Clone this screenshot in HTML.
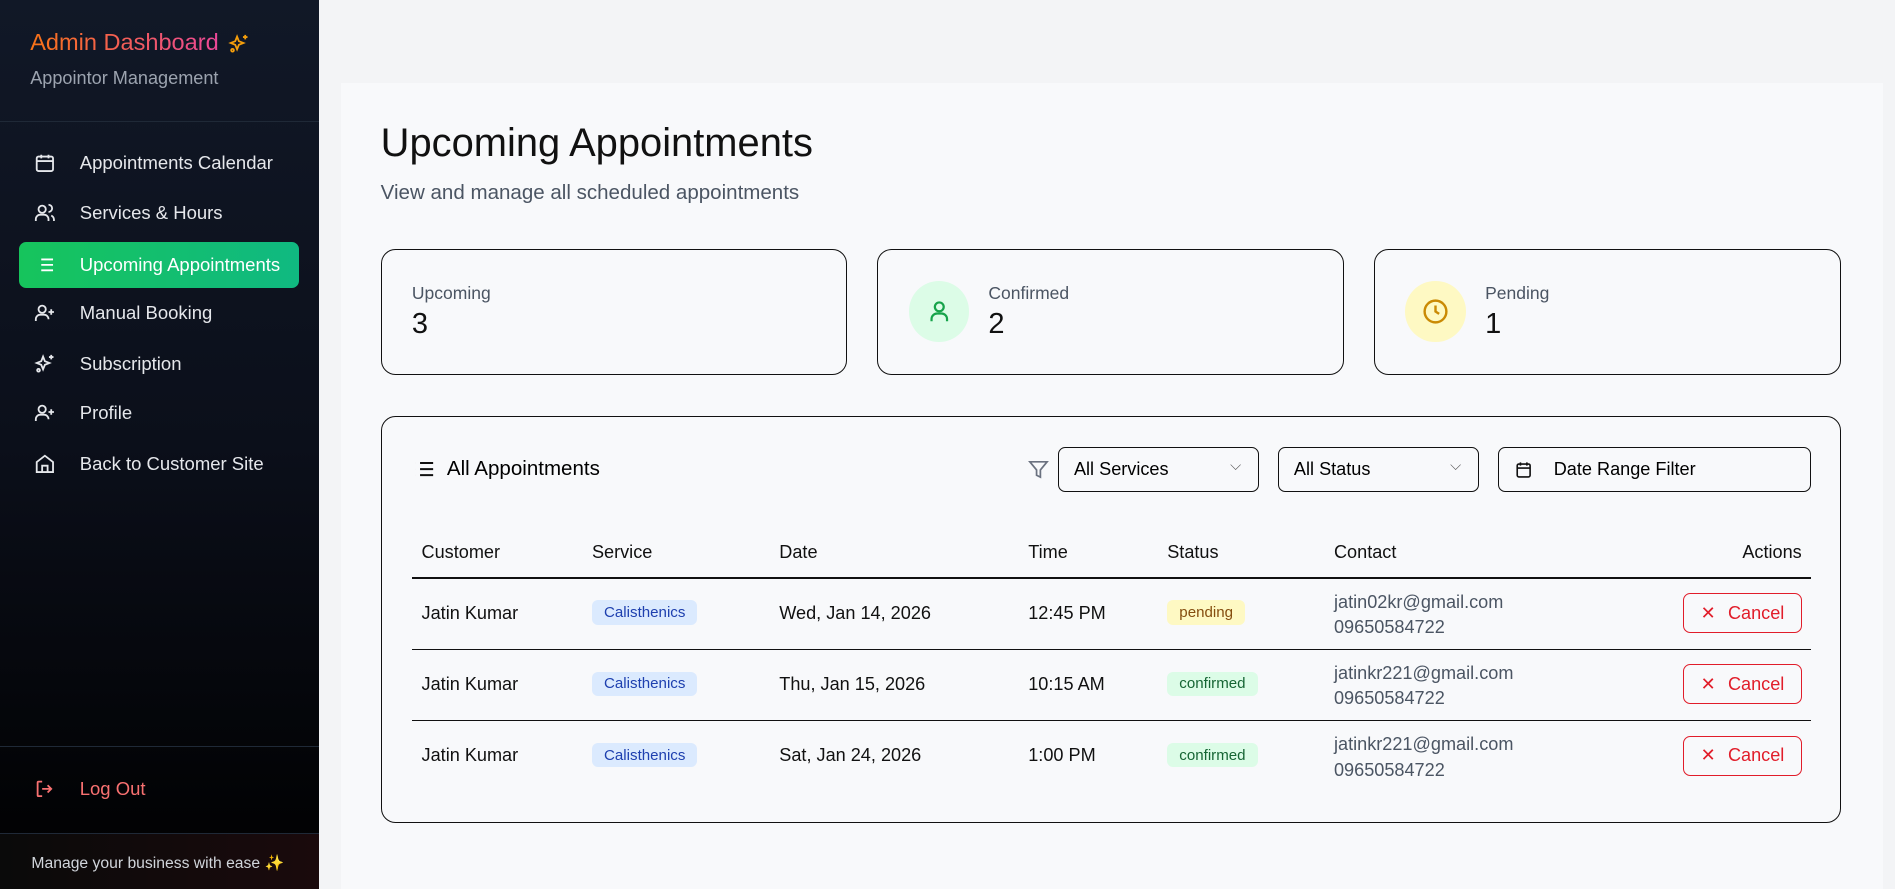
<!DOCTYPE html>
<html><head><style>
html{zoom:1.20855;overflow:hidden}
*{box-sizing:border-box;margin:0;padding:0}
body{width:1568px;height:736px;overflow:hidden;font-family:"Liberation Sans",sans-serif;background:#f3f4f6;position:relative}
.sb{position:absolute;left:0;top:0;width:264px;height:736px;background:linear-gradient(180deg,#111827 0%,#0b0f1a 50%,#000 100%)}
.ttl{position:absolute;left:25px;top:24px;font-size:19.5px;background:linear-gradient(90deg,#f97316,#ec4899);-webkit-background-clip:text;color:transparent}
.sub{position:absolute;left:25px;top:56px;font-size:15px;color:#9ca3af}
.hr{position:absolute;left:0;width:264px;height:1px;background:#1f2937}
.nav{position:absolute;left:16px;width:231px;height:38px;color:#e5e7eb;font-size:15.3px;display:flex;align-items:center}
.nav svg{position:absolute;left:12px}
.nav span{position:absolute;left:50px}
.act{background:linear-gradient(90deg,#16c45c,#10b981);border-radius:6px;color:#fff}
.main{position:absolute;left:282px;top:69px;width:1276px;height:667px;background:#f8f9fb}
.card{position:absolute;border:1px solid #111;border-radius:12px;background:#f8f9fb}
.lbl{position:absolute;font-size:14.5px;color:#4b5563}
.num{position:absolute;font-size:24px;color:#111}
.circ{position:absolute;left:25px;top:26px;width:50px;height:50px;border-radius:50%;display:flex;align-items:center;justify-content:center}
.sel{position:absolute;top:25px;height:37px;border:1px solid #111;border-radius:6px;font-size:15px;display:flex;align-items:center;padding-left:12px}
.row{position:absolute;left:25px;width:1158px;font-size:15px;color:#111}
.row div{position:absolute}
.pill{font-size:12.5px;padding:3px 10px;border-radius:5px}
.cx{position:absolute;right:8px;width:98px;height:33px;border:1px solid #e11d2a;border-radius:6px;color:#e11d2a;display:flex;align-items:center;justify-content:center;gap:10px;font-size:15px}
</style></head><body>
<div class="sb">
<div class="ttl">Admin Dashboard</div>
<svg style="position:absolute;left:189px;top:27px" width="18" height="18" viewBox="0 0 24 24" fill="none" stroke="#f59e0b" stroke-width="2"><path d="M10 4l2 5 5 2-5 2-2 5-2-5-5-2 5-2z"/><path d="M19 2v5M16.5 4.5h5"/><circle cx="5" cy="19" r="1.5"/></svg>
<div class="sub">Appointor Management</div>
<div class="hr" style="top:100px"></div>
<div class="nav" style="top:116px"><svg width="18" height="18" viewBox="0 0 24 24" fill="none" stroke="#e5e7eb" stroke-width="2"><rect x="3" y="5" width="18" height="16" rx="2"/><path d="M3 10h18M8 3v4M16 3v4"/></svg><span>Appointments Calendar</span></div>
<div class="nav" style="top:157px"><svg width="18" height="18" viewBox="0 0 24 24" fill="none" stroke="#e5e7eb" stroke-width="2"><circle cx="9" cy="8" r="4"/><path d="M2 21v-2a5 5 0 015-5h4a5 5 0 015 5v2M16 3a4 4 0 010 8M22 21v-2a5 5 0 00-3-4"/></svg><span>Services &amp; Hours</span></div>
<div class="nav act" style="top:200px"><svg width="18" height="18" viewBox="0 0 24 24" fill="none" stroke="#fff" stroke-width="2"><path d="M8 6h13M8 12h13M8 18h13M3 6h.01M3 12h.01M3 18h.01"/></svg><span>Upcoming Appointments</span></div>
<div class="nav" style="top:240px"><svg width="18" height="18" viewBox="0 0 24 24" fill="none" stroke="#e5e7eb" stroke-width="2"><circle cx="9" cy="8" r="4"/><path d="M2 21v-2a5 5 0 015-5h4a5 5 0 015 5M19 8v6M16 11h6"/></svg><span>Manual Booking</span></div>
<div class="nav" style="top:282px"><svg width="18" height="18" viewBox="0 0 24 24" fill="none" stroke="#e5e7eb" stroke-width="2"><path d="M10 4l2 5 5 2-5 2-2 5-2-5-5-2 5-2z"/><path d="M19 2v5M16.5 4.5h5"/><circle cx="5" cy="19" r="1.5"/></svg><span>Subscription</span></div>
<div class="nav" style="top:323px"><svg width="18" height="18" viewBox="0 0 24 24" fill="none" stroke="#e5e7eb" stroke-width="2"><circle cx="9" cy="8" r="4"/><path d="M2 21v-2a5 5 0 015-5h4a5 5 0 015 5M19 8v6M16 11h6"/></svg><span>Profile</span></div>
<div class="nav" style="top:365px"><svg width="18" height="18" viewBox="0 0 24 24" fill="none" stroke="#e5e7eb" stroke-width="2"><path d="M3 10l9-7 9 7v11H3z"/><path d="M9 21v-7h6v7"/></svg><span>Back to Customer Site</span></div>
<div class="hr" style="top:617px"></div>
<div class="nav" style="top:634px;color:#f87171"><svg width="18" height="18" viewBox="0 0 24 24" fill="none" stroke="#f87171" stroke-width="2"><path d="M9 4H5a1 1 0 00-1 1v14a1 1 0 001 1h4M15 8l4 4-4 4M19 12H9"/></svg><span>Log Out</span></div>
<div class="hr" style="top:689px"></div>
<div style="position:absolute;left:0;top:690px;width:264px;height:46px;background:linear-gradient(90deg,#0a0a0a,#1a0a0c)"></div>
<div style="position:absolute;left:26px;top:706px;font-size:13px;color:#d1d5db">Manage your business with ease ✨</div>
</div>
<div class="main">
<div style="position:absolute;left:33px;top:31px;font-size:33px;color:#111">Upcoming Appointments</div>
<div style="position:absolute;left:33px;top:81px;font-size:17px;color:#4b5563">View and manage all scheduled appointments</div>
<div class="card" style="left:33px;top:137px;width:386px;height:104px"><div class="lbl" style="left:25px;top:27px">Upcoming</div><div class="num" style="left:25px;top:48px">3</div></div>
<div class="card" style="left:444px;top:137px;width:386px;height:104px"><div class="circ" style="background:#dcfce7"><svg width="22" height="22" viewBox="0 0 24 24" fill="none" stroke="#16a34a" stroke-width="2"><circle cx="12" cy="8" r="4"/><path d="M5 21v-2a5 5 0 015-5h4a5 5 0 015 5v2"/></svg></div><div class="lbl" style="left:91px;top:27px">Confirmed</div><div class="num" style="left:91px;top:48px">2</div></div>
<div class="card" style="left:855px;top:137px;width:386px;height:104px"><div class="circ" style="background:#fef9c3"><svg width="24" height="24" viewBox="0 0 24 24" fill="none" stroke="#ca8a04" stroke-width="2"><circle cx="12" cy="12" r="9"/><path d="M12 7v5l3 2"/></svg></div><div class="lbl" style="left:91px;top:27px">Pending</div><div class="num" style="left:91px;top:48px">1</div></div>
<div class="card" style="left:33px;top:275px;width:1208px;height:337px">
<svg style="position:absolute;left:25px;top:33px" width="20" height="20" viewBox="0 0 24 24" fill="none" stroke="#111" stroke-width="2"><path d="M8 6h13M8 12h13M8 18h13M3 6h.01M3 12h.01M3 18h.01"/></svg>
<div style="position:absolute;left:54px;top:33px;font-size:17px">All Appointments</div>
<svg style="position:absolute;left:534px;top:34px" width="19" height="19" viewBox="0 0 24 24" fill="none" stroke="#6b7280" stroke-width="1.8"><path d="M3 4h18l-7 8.5V20l-4-2v-5.5z"/></svg>
<div class="sel" style="left:560px;width:166px">All Services<span style="position:absolute;right:14px;top:8px;font-size:12px;color:#555">⌵</span></div>
<div class="sel" style="left:742px;width:166px">All Status<span style="position:absolute;right:14px;top:8px;font-size:12px;color:#555">⌵</span></div>
<div class="sel" style="left:924px;width:259px"><svg width="16" height="16" viewBox="0 0 24 24" fill="none" stroke="#111" stroke-width="2"><rect x="4" y="5" width="16" height="16" rx="2"/><path d="M4 10h16M8 3v4M16 3v4"/></svg><span style="margin-left:17px">Date Range Filter</span></div>
<div class="row" style="top:104px;height:30px;font-size:15px"><div style="left:8px">Customer</div><div style="left:149px">Service</div><div style="left:304px">Date</div><div style="left:510px">Time</div><div style="left:625px">Status</div><div style="left:763px">Contact</div><div style="right:8px">Actions</div></div>
<div style="position:absolute;left:25px;top:133px;width:1158px;height:1px;background:#111"></div>
<div style="position:absolute;left:25px;top:192px;width:1158px;height:1px;background:#111"></div>
<div style="position:absolute;left:25px;top:251px;width:1158px;height:1px;background:#111"></div>
<div class="row" style="top:134px;height:58px"><div style="left:8px;top:20px">Jatin Kumar</div><div class="pill" style="left:149px;top:18px;background:#dbeafe;color:#1e40af">Calisthenics</div><div style="left:304px;top:20px">Wed, Jan 14, 2026</div><div style="left:510px;top:20px">12:45 PM</div><div class="pill" style="left:625px;top:18px;background:#fef9c3;color:#854d0e">pending</div><div style="left:763px;top:9px;color:#4b5563;line-height:21px">jatin02kr@gmail.com<br>09650584722</div><div class="cx" style="top:12px">✕<span>Cancel</span></div></div>
<div class="row" style="top:193px;height:58px"><div style="left:8px;top:20px">Jatin Kumar</div><div class="pill" style="left:149px;top:18px;background:#dbeafe;color:#1e40af">Calisthenics</div><div style="left:304px;top:20px">Thu, Jan 15, 2026</div><div style="left:510px;top:20px">10:15 AM</div><div class="pill" style="left:625px;top:18px;background:#dcfce7;color:#166534">confirmed</div><div style="left:763px;top:9px;color:#4b5563;line-height:21px">jatinkr221@gmail.com<br>09650584722</div><div class="cx" style="top:12px">✕<span>Cancel</span></div></div>
<div class="row" style="top:252px;height:58px"><div style="left:8px;top:20px">Jatin Kumar</div><div class="pill" style="left:149px;top:18px;background:#dbeafe;color:#1e40af">Calisthenics</div><div style="left:304px;top:20px">Sat, Jan 24, 2026</div><div style="left:510px;top:20px">1:00 PM</div><div class="pill" style="left:625px;top:18px;background:#dcfce7;color:#166534">confirmed</div><div style="left:763px;top:9px;color:#4b5563;line-height:21px">jatinkr221@gmail.com<br>09650584722</div><div class="cx" style="top:12px">✕<span>Cancel</span></div></div>
</div>
</div>
</body></html>
